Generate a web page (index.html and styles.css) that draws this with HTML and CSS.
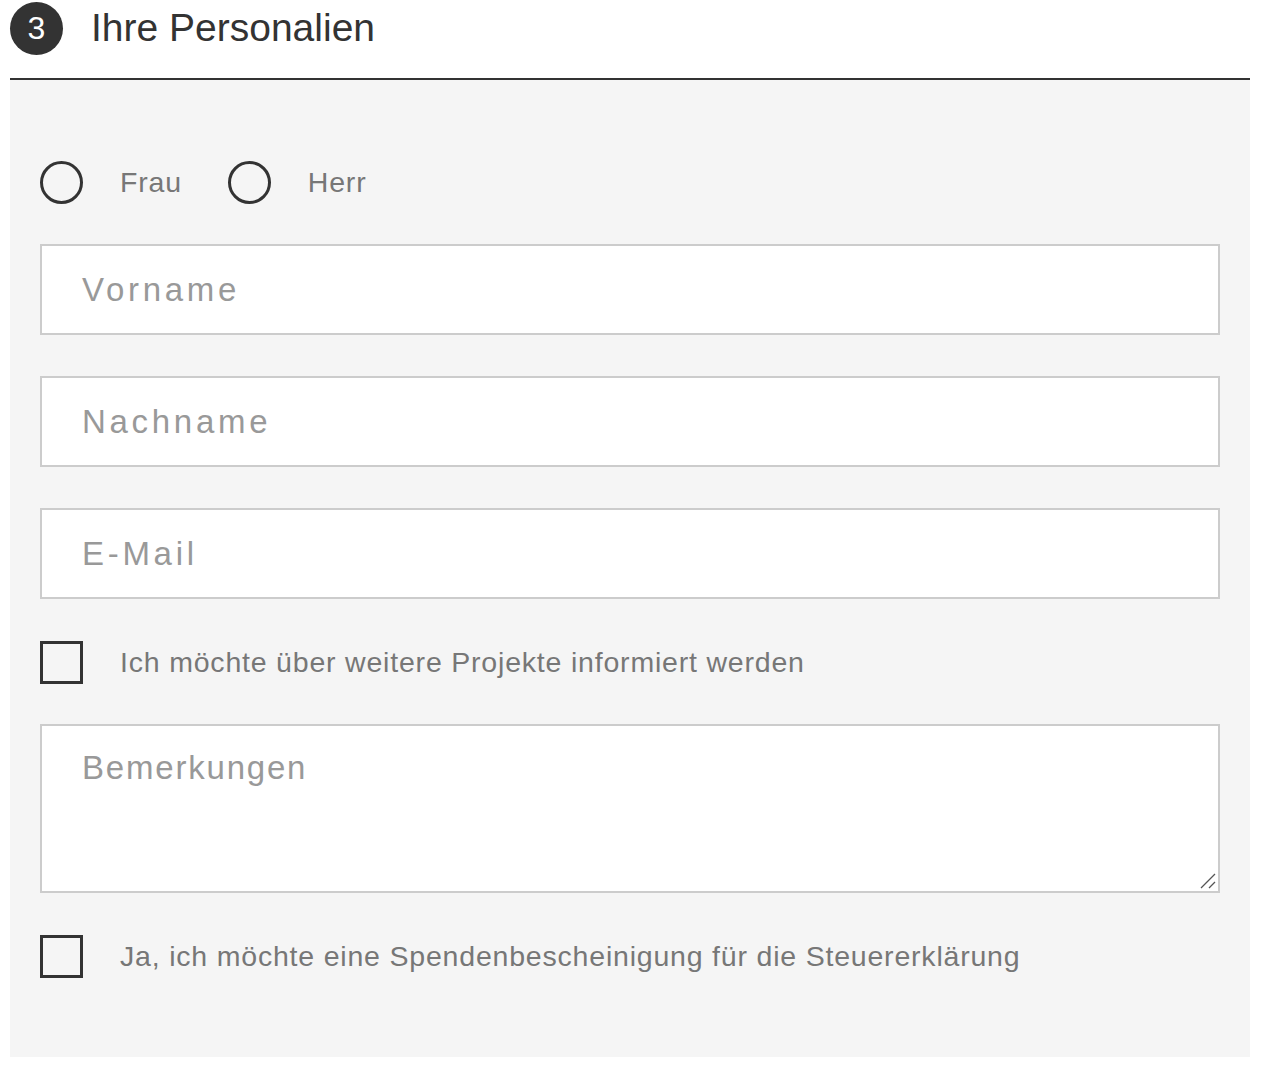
FILE: index.html
```html
<!DOCTYPE html>
<html lang="de">
<head>
<meta charset="utf-8">
<title>Ihre Personalien</title>
<link rel="stylesheet" href="styles.css">
</head>
<body>
<section class="step">
  <header class="step-head">
    <span class="step-num">3</span>
    <h2 class="step-title">Ihre Personalien</h2>
  </header>
  <form class="step-body">
    <div class="salutation">
      <label class="choice"><span class="radio"></span><span class="choice-text">Frau</span></label>
      <label class="choice"><span class="radio"></span><span class="choice-text">Herr</span></label>
    </div>
    <div class="field">Vorname</div>
    <div class="field">Nachname</div>
    <div class="field">E-Mail</div>
    <label class="choice check-row"><span class="box"></span><span class="choice-text">Ich möchte über weitere Projekte informiert werden</span></label>
    <div class="area">
      <span class="area-text">Bemerkungen</span>
      <svg class="grip" width="16" height="16" viewBox="0 0 16 16"><path d="M1 15 L15 1 M9 15 L15 9" stroke="#555" stroke-width="1.3" fill="none"/></svg>
    </div>
    <label class="choice check-row"><span class="box"></span><span class="choice-text">Ja, ich möchte eine Spendenbescheinigung für die Steuererklärung</span></label>
  </form>
</section>
</body>
</html>
```

FILE: styles.css
```css
html, body {
  margin: 0;
  padding: 0;
  background: #fff;
}

body {
  font-family: "Liberation Sans", Arial, Helvetica, sans-serif;
  padding: 0 14px 0 10px;
}

/* step header: numbered disc + title, dark rule below */
.step-head {
  display: flex;
  align-items: center;
  height: 56px;
  padding-bottom: 22px;
  border-bottom: 2px solid #333;
}

.step-num {
  width: 53px;
  height: 53px;
  border-radius: 50%;
  background: #333;
  color: #fff;
  font-size: 32px;
  display: flex;
  align-items: center;
  justify-content: center;
  margin-right: 28px;
  flex: none;
}

.step-title {
  margin: 0;
  font-weight: normal;
  font-size: 39px;
  color: #333;
}

/* grey form panel */
.step-body {
  background: #f5f5f5;
  padding: 80px 30px 79px 30px;
  display: flex;
  flex-direction: column;
}

.salutation {
  display: flex;
  gap: 46px;
  margin-bottom: 40px;
}

.choice {
  display: flex;
  align-items: center;
  color: #777;
  font-size: 28.5px;
  letter-spacing: 0.8px;
  height: 44px;
}

.radio {
  width: 37px;
  height: 37px;
  border: 3.5px solid #333;
  border-radius: 50%;
  margin-right: 37px;
  flex: none;
}

.box {
  width: 37px;
  height: 37px;
  border: 3.5px solid #333;
  margin-right: 37px;
  flex: none;
}

.field {
  height: 87px;
  border: 2px solid #ccc;
  background: #fff;
  display: flex;
  align-items: center;
  padding: 0 40px;
  font-size: 33px;
  letter-spacing: 3.7px;
  color: #999;
  margin-bottom: 41px;
}

.check-row {
  margin-bottom: 40px;
}

.area {
  position: relative;
  height: 165px;
  border: 2px solid #ccc;
  background: #fff;
  padding: 0 40px;
  margin-bottom: 41px;
  font-size: 33px;
  letter-spacing: 1.8px;
  color: #999;
}

.area-text {
  display: block;
  padding-top: 23px;
}

.grip {
  position: absolute;
  right: 2px;
  bottom: 2px;
}

.check-row:last-child {
  margin-bottom: 0;
}
```
